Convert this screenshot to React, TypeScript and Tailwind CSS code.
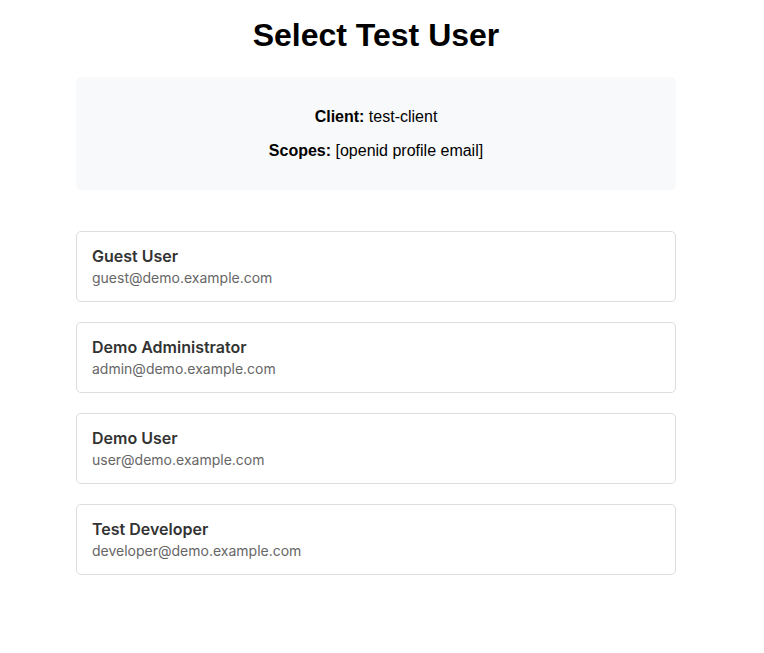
const users = [
  { name: 'Guest User', email: 'guest@demo.example.com' },
  { name: 'Demo Administrator', email: 'admin@demo.example.com' },
  { name: 'Demo User', email: 'user@demo.example.com' },
  { name: 'Test Developer', email: 'developer@demo.example.com' },
]

export default function App() {
  return (
    <div className="min-h-[653px] bg-white w-[752px]">
      <div className="w-[600px] mx-auto pt-[17px]">
        <h1 className="text-center text-[32px] font-bold leading-[37px] text-black font-['Liberation_Sans',Arial,sans-serif]">
          Select Test User
        </h1>

        {/* Request info */}
        <div className="mt-[23px] bg-[#f8f9fa] rounded-[5px] pt-[31px] pb-[30px] flex flex-col gap-4 items-center text-base leading-[18px] text-black font-['Liberation_Sans',Arial,sans-serif]">
          <p>
            <strong>Client:</strong> test-client
          </p>
          <p>
            <strong>Scopes:</strong> [openid profile email]
          </p>
        </div>

        {/* User list */}
        <div className="mt-[41px] flex flex-col gap-[20px] font-['Inter',sans-serif]">
          {users.map((u) => (
            <div
              key={u.email}
              className="h-[71px] border border-[#dddddd] rounded-[5px] px-[15px] pt-[15px] bg-white"
            >
              <div className="text-base font-semibold leading-[19px] text-[#333333]">{u.name}</div>
              <div className="mt-[3px] text-sm leading-[17px] text-[#666666]">{u.email}</div>
            </div>
          ))}
        </div>
      </div>
    </div>
  )
}
